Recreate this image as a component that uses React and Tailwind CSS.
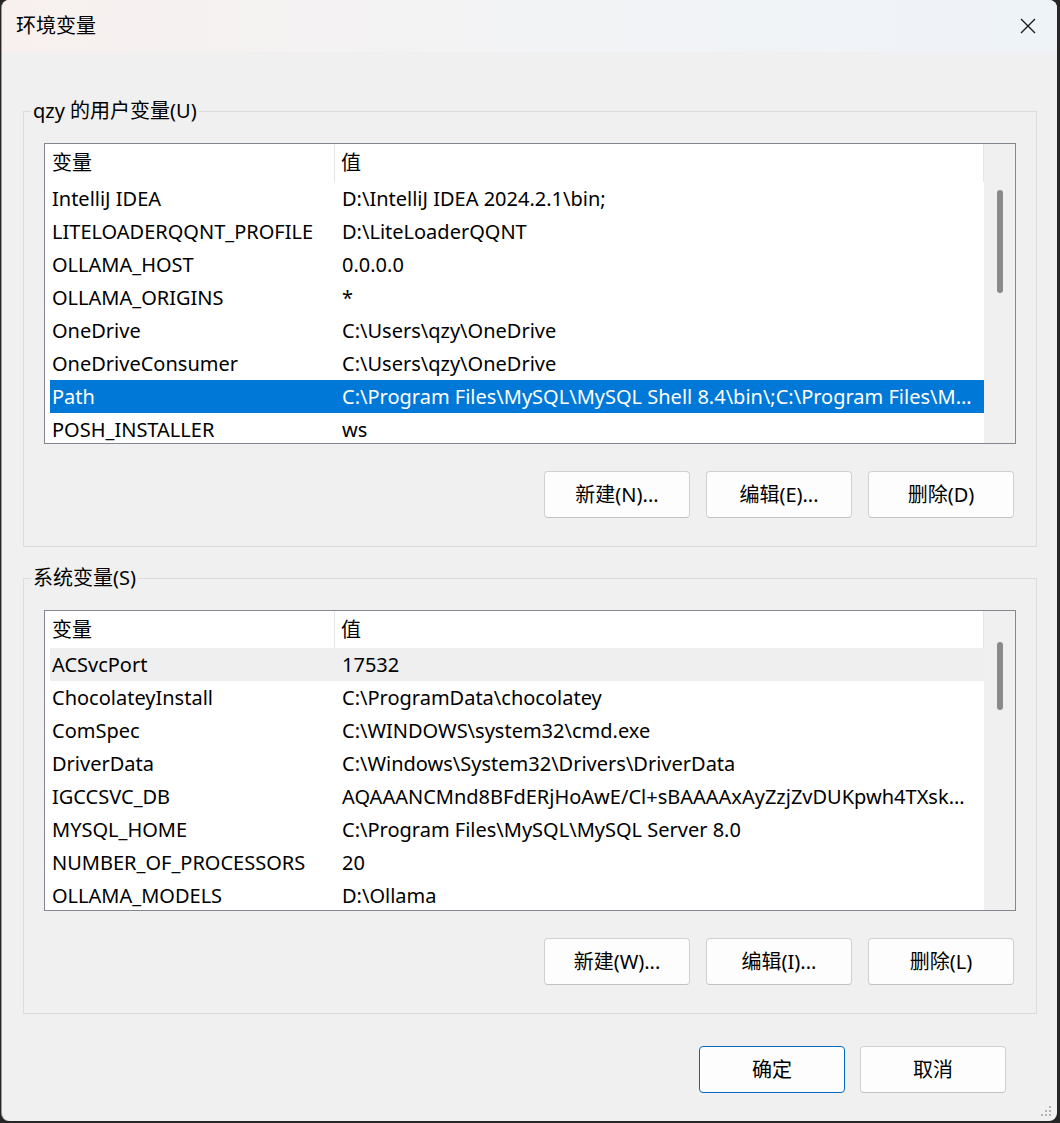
import React from 'react';

const FONT = '"Noto Sans", "Noto Sans CJK SC", sans-serif';

const userVars = [
  { name: 'IntelliJ IDEA', value: 'D:\\IntelliJ IDEA 2024.2.1\\bin;' },
  { name: 'LITELOADERQQNT_PROFILE', value: 'D:\\LiteLoaderQQNT' },
  { name: 'OLLAMA_HOST', value: '0.0.0.0' },
  { name: 'OLLAMA_ORIGINS', value: '*' },
  { name: 'OneDrive', value: 'C:\\Users\\qzy\\OneDrive' },
  { name: 'OneDriveConsumer', value: 'C:\\Users\\qzy\\OneDrive' },
  { name: 'Path', value: 'C:\\Program Files\\MySQL\\MySQL Shell 8.4\\bin\\;C:\\Program Files\\MySQL\\MySQL Server 8.0\\bin', selected: true },
  { name: 'POSH_INSTALLER', value: 'ws' },
];

const sysVars = [
  { name: 'ACSvcPort', value: '17532', hover: true },
  { name: 'ChocolateyInstall', value: 'C:\\ProgramData\\chocolatey' },
  { name: 'ComSpec', value: 'C:\\WINDOWS\\system32\\cmd.exe' },
  { name: 'DriverData', value: 'C:\\Windows\\System32\\Drivers\\DriverData' },
  { name: 'IGCCSVC_DB', value: 'AQAAANCMnd8BFdERjHoAwE/Cl+sBAAAAxAyZzjZvDUKpwh4TXskLmNopQAAAAAACAAAAAAAQZgAAAAEAACAAAAD' },
  { name: 'MYSQL_HOME', value: 'C:\\Program Files\\MySQL\\MySQL Server 8.0' },
  { name: 'NUMBER_OF_PROCESSORS', value: '20' },
  { name: 'OLLAMA_MODELS', value: 'D:\\Ollama' },
];

const Button = ({ label, primary }) => (
  <button
    className={`w-[146px] h-[47px] shrink-0 rounded-[4px] bg-[#fdfdfd] text-[20px] text-black flex items-center justify-center border ${
      primary ? 'border-[#0067c0]' : 'border-[#d0d0d0] border-b-[#c2c2c2]'
    }`}
  >
    {label}
  </button>
);

const VarList = ({ rows, height, headerH, thumbTop, thumbH }) => (
  <div className="flex w-full border border-[#828790] bg-white" style={{ height }}>
    <div className="flex-1 flex flex-col overflow-hidden min-w-0">
      {/* header */}
      <div className="flex shrink-0 text-[20px] text-black" style={{ height: headerH }}>
        <div className="w-[290px] shrink-0 pl-[7px] flex items-center border-r border-[#e5e5e5]">变量</div>
        <div className="flex-1 pl-[6px] flex items-center border-r border-[#e5e5e5]">值</div>
      </div>
      {/* rows */}
      {rows.map((r) => (
        <div
          key={r.name}
          className={`flex shrink-0 h-[33px] ml-[5px] items-center text-[20px] ${
            r.selected ? 'bg-[#0078d7] text-white' : r.hover ? 'bg-[#efefef] text-black' : 'text-black'
          }`}
        >
          <div className="w-[285px] shrink-0 pl-[2px] whitespace-nowrap">{r.name}</div>
          <div className="flex-1 min-w-0 pl-[7px] pr-[10px] truncate">{r.value}</div>
        </div>
      ))}
    </div>
    {/* scrollbar */}
    <div className="w-[31px] shrink-0 bg-[#f0f0f0] flex justify-center">
      <div className="w-[6px] rounded-full bg-[#8a8a8a]" style={{ marginTop: thumbTop, height: thumbH }} />
    </div>
  </div>
);

const Group = ({ title, children }) => (
  <fieldset className="w-[1014px] min-w-0 ml-[21px] border border-[#dcdcdc] px-[20px] pt-[18px] pb-[28px]">
    <legend className="ml-[-13px] px-[2px] text-[20px] leading-[28px] text-black">{title}</legend>
    {children}
  </fieldset>
);

export default function App() {
  return (
    <div className="w-[1060px] h-[1123px] bg-[#262626] pl-[1px]" style={{ fontFamily: FONT }}>
      <div className="relative w-[1056px] h-[1121px] rounded-[8px] overflow-hidden bg-[#f0f0f0] border-l border-[#9a9a9a] flex flex-col">
        {/* title bar */}
        <div className="h-[52px] shrink-0 flex items-center justify-between pl-[14px] pr-[18px] bg-gradient-to-r from-[#f7f0ee] via-[#f2f3f5] to-[#eef3f8]">
          <span className="text-[20px] text-black">环境变量</span>
          <svg width="18" height="18" viewBox="0 0 18 18" className="mr-[2px]">
            <path d="M2 2 L16 16 M16 2 L2 16" stroke="#1b1b1b" strokeWidth="1.4" />
          </svg>
        </div>

        <div className="flex flex-col pt-[45px]">
          <Group title="qzy 的用户变量(U)">
            <VarList rows={userVars} height={301} headerH={38} thumbTop={46} thumbH={103} />
            <div className="flex justify-end gap-[16px] pt-[27px] pr-[2px]">
              <Button label="新建(N)..." />
              <Button label="编辑(E)..." />
              <Button label="删除(D)" />
            </div>
          </Group>

          <div className="h-[17px]" />

          <Group title="系统变量(S)">
            <VarList rows={sysVars} height={301} headerH={37} thumbTop={31} thumbH={68} />
            <div className="flex justify-end gap-[16px] pt-[27px] pr-[2px]">
              <Button label="新建(W)..." />
              <Button label="编辑(I)..." />
              <Button label="删除(L)" />
            </div>
          </Group>

          <div className="flex justify-end gap-[15px] pt-[32px] pr-[51px]">
            <Button label="确定" primary />
            <Button label="取消" />
          </div>
        </div>

        {/* resize grip */}
        <svg width="12" height="12" viewBox="0 0 12 12" className="absolute right-[4px] bottom-[3px]">
          <rect x="8" y="0" width="2" height="2" fill="#b5b5b5" />
          <rect x="4" y="4" width="2" height="2" fill="#b5b5b5" />
          <rect x="8" y="4" width="2" height="2" fill="#b5b5b5" />
          <rect x="0" y="8" width="2" height="2" fill="#b5b5b5" />
          <rect x="4" y="8" width="2" height="2" fill="#b5b5b5" />
          <rect x="8" y="8" width="2" height="2" fill="#b5b5b5" />
        </svg>
      </div>
    </div>
  );
}
